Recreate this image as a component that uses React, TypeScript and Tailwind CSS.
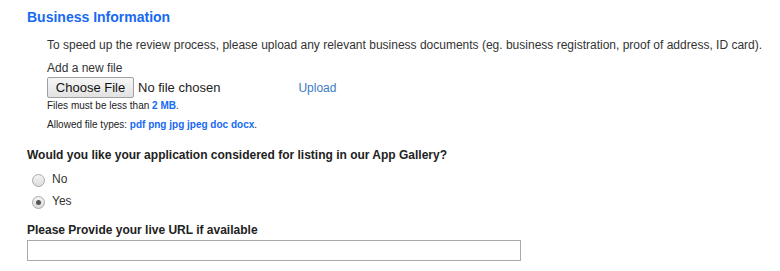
import React from 'react'

const Radio = ({ checked }: { checked?: boolean }) => (
  <span className="flex h-[13px] w-[13px] translate-y-[1px] items-center justify-center rounded-full border border-[#a9a9a9] bg-gradient-to-b from-[#f4f4f4] to-[#dcdcdc]">
    {checked && <span className="h-[5px] w-[5px] rounded-full bg-[#555]" />}
  </span>
)

const App = () => {
  return (
    <div className="bg-white w-[780px] h-[271px] pl-[27px] pt-[8px] text-[#333] font-['Liberation_Sans',Arial,sans-serif]">
      <div className="text-[14px] font-bold text-[#1669f2] leading-[18px]">Business Information</div>
      <div className="pl-[20px] mt-[12px]">
        <p className="text-[12px] leading-[14px] whitespace-nowrap">
          To speed up the review process, please upload any relevant business documents (eg. business registration, proof of address, ID card).
        </p>
        <div className="mt-[9px] text-[12px] leading-[14px]">Add a new file</div>
        <div className="flex items-center mt-[2px] text-[13px]">
          <span className="flex h-[21px] w-[87px] items-center justify-center rounded-[2px] border border-[#a0a0a0] bg-gradient-to-b from-[#f6f6f6] to-[#e2e2e2] text-[#111]">
            Choose File
          </span>
          <span className="ml-[4px] text-[#222]">No file chosen</span>
          <a className="ml-[78px] text-[12px] text-[#3b7bc6]" href="#">Upload</a>
        </div>
        <div className="mt-[2px] text-[10px] leading-[12px] text-[#222]">
          Files must be less than <span className="font-bold text-[#1669f2]">2 MB</span>.
        </div>
        <div className="mt-[7px] text-[10px] leading-[12px] text-[#222]">
          Allowed file types: <span className="font-bold text-[#1669f2]">pdf png jpg jpeg doc docx</span>.
        </div>
      </div>
      <div className="mt-[17px] text-[12px] font-bold leading-[14px] text-[#222]">
        Would you like your application considered for listing in our App Gallery?
      </div>
      <div className="mt-[10px] flex flex-col gap-[7px] pl-[5px] text-[12px]">
        <label className="flex items-center gap-[7px] leading-[15px]">
          <Radio />
          <span>No</span>
        </label>
        <label className="flex items-center gap-[7px] leading-[15px]">
          <Radio checked />
          <span>Yes</span>
        </label>
      </div>
      <div className="mt-[14px] text-[12px] font-bold leading-[14px] text-[#222]">
        Please Provide your live URL if available
      </div>
      <input
        type="text"
        className="mt-[3px] block h-[21px] w-[494px] border border-[#a9a9a9] bg-white outline-none"
      />
    </div>
  )
}

export default App
